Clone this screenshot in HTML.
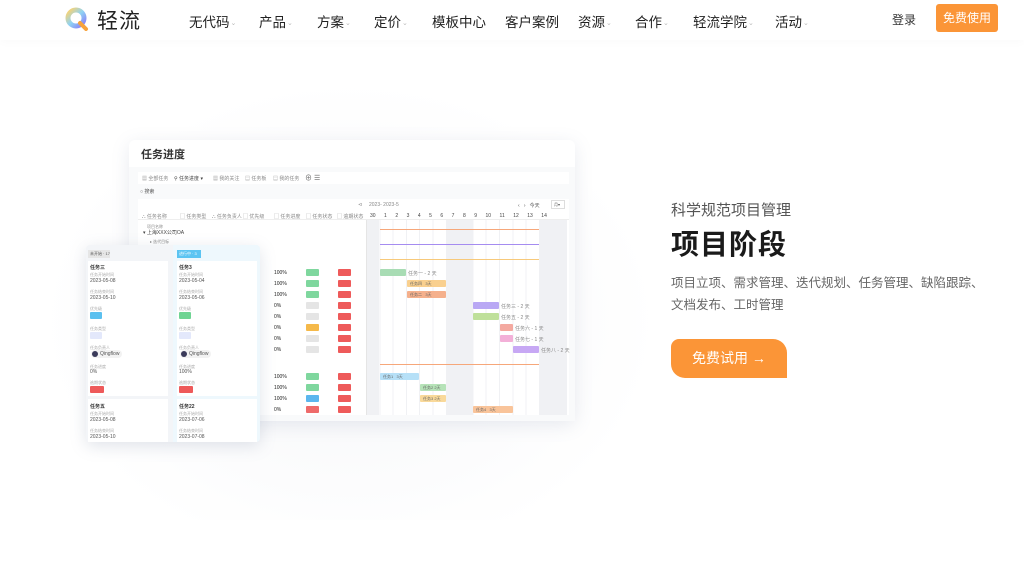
<!DOCTYPE html>
<html><head><meta charset="utf-8">
<style>
*{margin:0;padding:0;box-sizing:border-box}
body{width:1024px;height:571px;overflow:hidden;background:#fff;font-family:"Liberation Sans","Noto Sans CJK SC",sans-serif;position:relative;color:#222}
.a{position:absolute}
.nav{font-size:13.5px;color:#222;top:11px}
.nav i{font-style:normal;color:#bbb;font-size:7px;margin-left:1px;vertical-align:2px}
.t{position:absolute;font-size:5px;color:#888;white-space:nowrap}
.b{position:absolute;height:7px;border-radius:1px;font-size:4px;color:#666;line-height:7px;padding-left:3px;white-space:nowrap}
.tag{position:absolute;width:13px;height:7px;border-radius:1px}
.line{position:absolute;height:1px;left:380px;width:159px}
.k{position:absolute;font-size:5px;white-space:nowrap}
</style></head><body>
<div class="a" style="left:40px;top:80px;width:620px;height:440px;background:radial-gradient(ellipse at 50% 55%,rgba(200,205,220,.18),rgba(255,255,255,0) 70%)"></div>
<div class="a" style="left:0;top:0;width:1024px;height:40px;background:#fff;box-shadow:0 3px 8px rgba(0,0,0,.02)"></div>
<svg class="a" style="left:65px;top:7px" width="26" height="24" viewBox="0 0 26 24">
<defs><linearGradient id="g" x1="0" y1="0" x2="1" y2="1"><stop offset="0" stop-color="#ffd36b"/><stop offset=".5" stop-color="#8fd3f4"/><stop offset="1" stop-color="#8a7cf6"/></linearGradient></defs>
<circle cx="11" cy="11" r="8" fill="none" stroke="url(#g)" stroke-width="5"/><path d="M15 16 L21 22" stroke="#f7a23c" stroke-width="4" stroke-linecap="round"/></svg>
<div class="a" style="left:97px;top:5px;font-size:21px;color:#222;letter-spacing:1px">轻流</div>
<div class="a nav" style="left:189px">无代码<i>⌄</i></div>
<div class="a nav" style="left:259px">产品<i>⌄</i></div>
<div class="a nav" style="left:317px">方案<i>⌄</i></div>
<div class="a nav" style="left:374px">定价<i>⌄</i></div>
<div class="a nav" style="left:432px">模板中心</div>
<div class="a nav" style="left:505px">客户案例</div>
<div class="a nav" style="left:578px">资源<i>⌄</i></div>
<div class="a nav" style="left:635px">合作<i>⌄</i></div>
<div class="a nav" style="left:693px">轻流学院<i>⌄</i></div>
<div class="a nav" style="left:775px">活动<i>⌄</i></div>
<div class="a" style="left:892px;top:11px;font-size:12px;color:#333">登录</div>
<div class="a" style="left:936px;top:4px;width:62px;height:28px;background:#fb9537;border-radius:3px;color:#fff;font-size:12px;line-height:28px;text-align:center">免费使用</div>

<div class="a" style="left:129px;top:140px;width:446px;height:281px;background:#fff;border-radius:6px;box-shadow:0 4px 18px rgba(120,130,160,.16)"></div>
<div class="a" style="left:129px;top:167px;width:446px;height:254px;background:#f9fafb"></div>
<div class="a" style="left:141px;top:146px;font-size:11px;font-weight:bold;color:#333">任务进度</div>
<div class="a" style="left:138px;top:172px;width:431px;height:12px;background:#fff"></div>
<div class="t" style="left:142px;top:175px">▦ 全部任务</div>
<div class="t" style="left:174px;top:175px;color:#444">⚲ 任务进度 ▾</div>
<div class="t" style="left:213px;top:175px">▦ 我的关注</div>
<div class="t" style="left:245px;top:175px">▤ 任务板</div>
<div class="t" style="left:273px;top:175px">▤ 我的任务</div>
<div class="t" style="left:305px;top:173px;font-size:7px;color:#666">⊕ ☰</div>
<div class="t" style="left:140px;top:188px;color:#555">○ 搜索</div>
<div class="a" style="left:138px;top:199px;width:431px;height:216px;background:#fff"></div>
<div class="t" style="left:358px;top:202px">⊲</div>
<div class="t" style="left:369px;top:202px">2023- 2023-5</div>
<div class="t" style="left:518px;top:202px;color:#555">‹ &nbsp; › &nbsp; 今天</div>
<div class="a" style="left:551px;top:200px;width:14px;height:9px;border:1px solid #ddd;font-size:4px;line-height:7px;padding-left:2px;color:#555">月▾</div>
<div class="a" style="left:138px;top:210px;width:431px;height:10px;border-bottom:1px solid #eee"></div>
<div class="t" style="left:142px;top:213px">⛬ 任务名称</div>
<div class="t" style="left:180px;top:213px">▢ 任务类型</div>
<div class="t" style="left:212px;top:213px">⛬ 任务负责人</div>
<div class="t" style="left:243px;top:213px">▢ 优先级</div>
<div class="t" style="left:274px;top:213px">▢ 任务进度</div>
<div class="t" style="left:306px;top:213px">▢ 任务状态</div>
<div class="t" style="left:337px;top:213px">▢ 逾期状态</div>
<div class="t" style="left:370px;top:213px;color:#444;word-spacing:7.1px">30 1 2 3 4 5 6 7 8 9 10 11 12 13 14</div>
<div class="a" style="left:367px;top:220px;width:200px;height:195px;background:repeating-linear-gradient(90deg,transparent 0 12.3px,#f0f1f4 12.3px 13.3px)"></div>
<div class="a" style="left:367px;top:220px;width:12px;height:195px;background:#f0f1f4"></div>
<div class="a" style="left:447px;top:220px;width:26px;height:195px;background:#f0f1f4"></div>
<div class="a" style="left:540px;top:220px;width:27px;height:195px;background:#f0f1f4"></div>
<div class="a" style="left:366px;top:220px;width:1px;height:195px;background:#e5e5e5"></div>
<div class="t" style="left:147px;top:224px;font-size:4px">项目名称</div>
<div class="t" style="left:143px;top:229px;color:#444">▾ 上海XXX公司OA</div>
<div class="t" style="left:150px;top:239px;font-size:4px">▸ 迭代目标</div>
<div class="line" style="top:229px;background:#f6a77a"></div>
<div class="line" style="top:244px;background:#a58cf0"></div>
<div class="line" style="top:259px;background:#f7c97a"></div>
<div class="line" style="top:364px;background:#f6a77a"></div>
<div class="k" style="left:274px;top:270px">100%</div><div class="tag" style="left:306px;top:269px;background:#7fd79e"></div><div class="tag" style="left:338px;top:269px;background:#ee5a5a"></div>
<div class="k" style="left:274px;top:281px">100%</div><div class="tag" style="left:306px;top:280px;background:#7fd79e"></div><div class="tag" style="left:338px;top:280px;background:#ee5a5a"></div>
<div class="k" style="left:274px;top:292px">100%</div><div class="tag" style="left:306px;top:291px;background:#7fd79e"></div><div class="tag" style="left:338px;top:291px;background:#ee5a5a"></div>
<div class="k" style="left:274px;top:303px">0%</div><div class="tag" style="left:306px;top:302px;background:#e5e5e5"></div><div class="tag" style="left:338px;top:302px;background:#ee5a5a"></div>
<div class="k" style="left:274px;top:314px">0%</div><div class="tag" style="left:306px;top:313px;background:#e5e5e5"></div><div class="tag" style="left:338px;top:313px;background:#ee5a5a"></div>
<div class="k" style="left:274px;top:325px">0%</div><div class="tag" style="left:306px;top:324px;background:#f5b94a"></div><div class="tag" style="left:338px;top:324px;background:#ee5a5a"></div>
<div class="k" style="left:274px;top:336px">0%</div><div class="tag" style="left:306px;top:335px;background:#e5e5e5"></div><div class="tag" style="left:338px;top:335px;background:#ee5a5a"></div>
<div class="k" style="left:274px;top:347px">0%</div><div class="tag" style="left:306px;top:346px;background:#e5e5e5"></div><div class="tag" style="left:338px;top:346px;background:#ee5a5a"></div>
<div class="k" style="left:274px;top:374px">100%</div><div class="tag" style="left:306px;top:373px;background:#7fd79e"></div><div class="tag" style="left:338px;top:373px;background:#ee5a5a"></div>
<div class="k" style="left:274px;top:385px">100%</div><div class="tag" style="left:306px;top:384px;background:#7fd79e"></div><div class="tag" style="left:338px;top:384px;background:#ee5a5a"></div>
<div class="k" style="left:274px;top:396px">100%</div><div class="tag" style="left:306px;top:395px;background:#5bb6ee"></div><div class="tag" style="left:338px;top:395px;background:#ee5a5a"></div>
<div class="k" style="left:274px;top:407px">0%</div><div class="tag" style="left:306px;top:406px;background:#ee6a6a"></div><div class="tag" style="left:338px;top:406px;background:#ee5a5a"></div>
<div class="b" style="left:380px;top:269px;width:26px;background:#a8dcb4"></div><div class="t" style="left:408px;top:270px">任务一 - 2 天</div>
<div class="b" style="left:407px;top:280px;width:39px;background:#f9d08f">任务四 &nbsp; 3天</div>
<div class="b" style="left:407px;top:291px;width:39px;background:#f5b08c">任务二 &nbsp; 3天</div>
<div class="b" style="left:473px;top:302px;width:26px;background:#b9a8f4"></div><div class="t" style="left:501px;top:303px">任务三 - 2 天</div>
<div class="b" style="left:473px;top:313px;width:26px;background:#bfe09a"></div><div class="t" style="left:501px;top:314px">任务五 - 2 天</div>
<div class="b" style="left:500px;top:324px;width:13px;background:#f4a9a0"></div><div class="t" style="left:515px;top:325px">任务六 - 1 天</div>
<div class="b" style="left:500px;top:335px;width:13px;background:#f3b0d8"></div><div class="t" style="left:515px;top:336px">任务七 - 1 天</div>
<div class="b" style="left:513px;top:346px;width:26px;background:#c7a8f4"></div><div class="t" style="left:541px;top:347px">任务八 - 2 天</div>
<div class="b" style="left:380px;top:373px;width:39px;background:#b6e0f7">任务1 &nbsp; 3天</div>
<div class="b" style="left:420px;top:384px;width:26px;background:#b6e3b8">任务2 2天</div>
<div class="b" style="left:420px;top:395px;width:26px;background:#f9d99a">任务3 2天</div>
<div class="b" style="left:473px;top:406px;width:40px;background:#f9c49a">任务4 &nbsp; 3天</div>

<div class="a" style="left:86px;top:245px;width:174px;height:197px;background:#f3f5f8;border-radius:4px;box-shadow:0 4px 16px rgba(120,130,160,.22)"></div>
<div class="a" style="left:173px;top:245px;width:87px;height:197px;background:#eef8fd;border-radius:0 4px 4px 0"></div>
<div class="a" style="left:88px;top:250px;width:22px;height:8px;background:#e6e6e6;font-size:4px;line-height:8px;padding-left:2px;color:#555">未开始 · 17</div>
<div class="a" style="left:177px;top:250px;width:24px;height:8px;background:#5bc4f2;font-size:4px;line-height:8px;padding-left:2px;color:#fff">进行中 · 3</div>
<div class="a" style="left:88px;top:261px;width:80px;height:135px;background:#fff"></div>
<div class="a" style="left:177px;top:261px;width:80px;height:135px;background:#fff"></div>
<div class="a" style="left:88px;top:399px;width:80px;height:43px;background:#fff"></div>
<div class="a" style="left:177px;top:399px;width:80px;height:43px;background:#fff"></div>
<div class="k" style="left:90px;top:264px;font-weight:bold;color:#333">任务三</div>
<div class="t" style="left:90px;top:272px;font-size:4px;color:#aaa">任务开始时间</div>
<div class="k" style="left:90px;top:278px;color:#555">2023-05-08</div>
<div class="t" style="left:90px;top:289px;font-size:4px;color:#aaa">任务结束时间</div>
<div class="k" style="left:90px;top:295px;color:#555">2023-05-10</div>
<div class="t" style="left:90px;top:306px;font-size:4px;color:#aaa">优先级</div>
<div class="tag" style="left:90px;top:312px;width:12px;background:#5bc0ef"></div>
<div class="t" style="left:90px;top:326px;font-size:4px;color:#aaa">任务类型</div>
<div class="tag" style="left:90px;top:332px;width:12px;background:#e3e8fb"></div>
<div class="t" style="left:90px;top:345px;font-size:4px;color:#aaa">任务负责人</div>
<div class="a" style="left:91px;top:350px;width:31px;height:8px;background:#f2f2f2;border-radius:4px"></div><div class="a" style="left:92px;top:351px;width:6px;height:6px;border-radius:50%;background:#3a3a5a"></div><div class="k" style="left:100px;top:351px;color:#555">Qingflow</div>
<div class="t" style="left:90px;top:364px;font-size:4px;color:#aaa">任务进度</div>
<div class="k" style="left:90px;top:369px;color:#555">0%</div>
<div class="t" style="left:90px;top:380px;font-size:4px;color:#aaa">逾期状态</div>
<div class="tag" style="left:90px;top:386px;width:14px;background:#ee5a5a"></div>
<div class="k" style="left:90px;top:403px;font-weight:bold;color:#333">任务五</div>
<div class="t" style="left:90px;top:411px;font-size:4px;color:#aaa">任务开始时间</div>
<div class="k" style="left:90px;top:417px;color:#555">2023-05-08</div>
<div class="t" style="left:90px;top:428px;font-size:4px;color:#aaa">任务结束时间</div>
<div class="k" style="left:90px;top:434px;color:#555">2023-05-10</div>
<div class="k" style="left:179px;top:264px;font-weight:bold;color:#333">任务3</div>
<div class="t" style="left:179px;top:272px;font-size:4px;color:#aaa">任务开始时间</div>
<div class="k" style="left:179px;top:278px;color:#555">2023-05-04</div>
<div class="t" style="left:179px;top:289px;font-size:4px;color:#aaa">任务结束时间</div>
<div class="k" style="left:179px;top:295px;color:#555">2023-05-06</div>
<div class="t" style="left:179px;top:306px;font-size:4px;color:#aaa">优先级</div>
<div class="tag" style="left:179px;top:312px;width:12px;background:#6fd493"></div>
<div class="t" style="left:179px;top:326px;font-size:4px;color:#aaa">任务类型</div>
<div class="tag" style="left:179px;top:332px;width:12px;background:#e3e8fb"></div>
<div class="t" style="left:179px;top:345px;font-size:4px;color:#aaa">任务负责人</div>
<div class="a" style="left:180px;top:350px;width:31px;height:8px;background:#f2f2f2;border-radius:4px"></div><div class="a" style="left:181px;top:351px;width:6px;height:6px;border-radius:50%;background:#3a3a5a"></div><div class="k" style="left:189px;top:351px;color:#555">Qingflow</div>
<div class="t" style="left:179px;top:364px;font-size:4px;color:#aaa">任务进度</div>
<div class="k" style="left:179px;top:369px;color:#555">100%</div>
<div class="t" style="left:179px;top:380px;font-size:4px;color:#aaa">逾期状态</div>
<div class="tag" style="left:179px;top:386px;width:14px;background:#ee5a5a"></div>
<div class="k" style="left:179px;top:403px;font-weight:bold;color:#333">任务22</div>
<div class="t" style="left:179px;top:411px;font-size:4px;color:#aaa">任务开始时间</div>
<div class="k" style="left:179px;top:417px;color:#555">2023-07-06</div>
<div class="t" style="left:179px;top:428px;font-size:4px;color:#aaa">任务结束时间</div>
<div class="k" style="left:179px;top:434px;color:#555">2023-07-08</div>

<div class="a" style="left:671px;top:199px;font-size:15px;color:#555">科学规范项目管理</div>
<div class="a" style="left:671px;top:223px;font-size:28px;font-weight:bold;color:#1a1a1a;letter-spacing:1px">项目阶段</div>
<div class="a" style="left:671px;top:272px;font-size:12.5px;line-height:22px;color:#666;white-space:nowrap">项目立项、需求管理、迭代规划、任务管理、缺陷跟踪、<br>文档发布、工时管理</div>
<div class="a" style="left:671px;top:339px;width:116px;height:39px;background:#fb9537;border-radius:8px 14px 0 14px;color:#fff;font-size:14px;line-height:39px;text-align:center">免费试用 →</div>
</body></html>
